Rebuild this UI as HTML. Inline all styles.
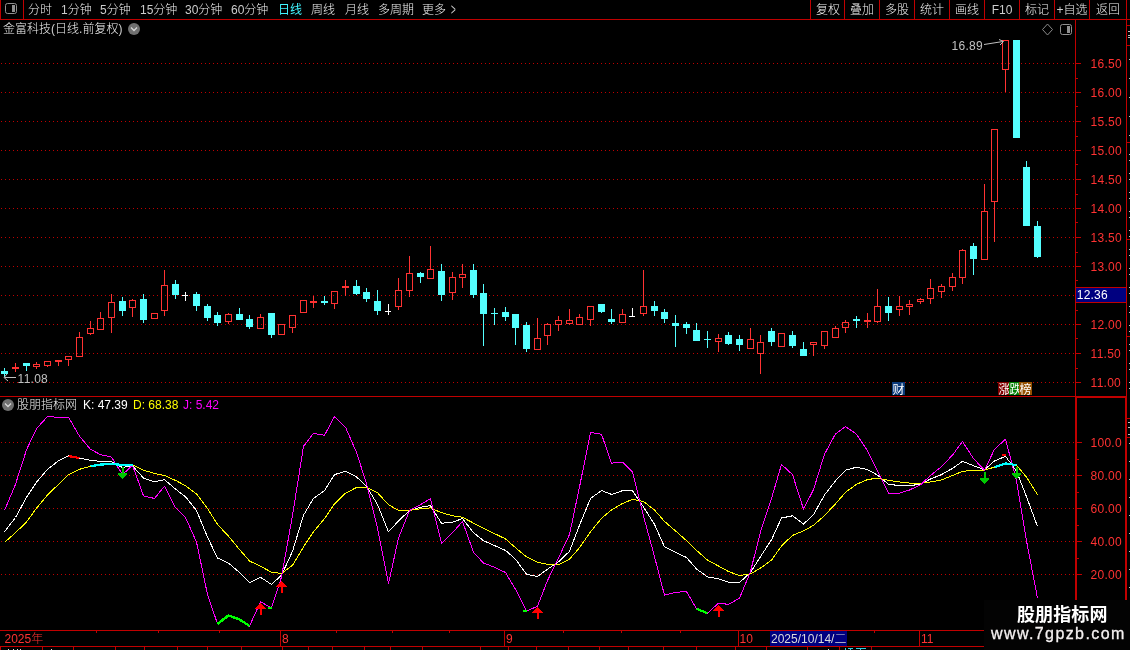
<!DOCTYPE html>
<html lang="zh"><head><meta charset="utf-8"><title>金富科技 日线</title>
<style>
html,body{margin:0;padding:0;background:#000;}
body{width:1130px;height:650px;overflow:hidden;position:relative;font-family:"Liberation Sans","Noto Sans CJK SC",sans-serif;font-size:12px;color:#F0F0F0;font-weight:300;}
.l{color:#CCCCCC;font-weight:400;}
.t{position:absolute;white-space:nowrap;line-height:14px;height:14px;}
.tb{top:3px;}
.bt{position:absolute;top:3px;width:34px;text-align:center;line-height:14px;white-space:nowrap;}
svg{position:absolute;left:0;top:0;}
#root{position:absolute;left:0;top:0;width:1130px;height:650px;overflow:hidden;will-change:transform;}
.ax{font-family:"Liberation Sans",sans-serif;font-size:12px;fill:#FF3232;letter-spacing:0.25px;}
#wm{position:absolute;left:984px;top:600px;width:146px;height:50px;background:#030303;}
#wm .a{position:absolute;left:33px;top:3px;font-size:18px;line-height:24px;font-weight:bold;color:#fff;white-space:nowrap;letter-spacing:0.1px;}
#wm .b{position:absolute;left:7px;top:24px;font-size:16px;line-height:20px;color:#f4f0f0;white-space:nowrap;letter-spacing:1.4px;-webkit-text-stroke:0.3px #f4f0f0;font-family:"Liberation Sans",sans-serif;}
.tag{position:absolute;top:382px;width:13px;height:13px;line-height:16px;font-size:12px;font-weight:400;color:#fff;overflow:hidden;text-align:center;}
</style></head><body><div id="root">

<svg width="1130" height="650" viewBox="0 0 1130 650" shape-rendering="crispEdges">
<line x1="1" y1="63.5" x2="1074" y2="63.5" stroke="#C00000" stroke-width="1" stroke-dasharray="1 3"/>
<line x1="1" y1="92.5" x2="1074" y2="92.5" stroke="#C00000" stroke-width="1" stroke-dasharray="1 3"/>
<line x1="1" y1="121.5" x2="1074" y2="121.5" stroke="#C00000" stroke-width="1" stroke-dasharray="1 3"/>
<line x1="1" y1="150.5" x2="1074" y2="150.5" stroke="#C00000" stroke-width="1" stroke-dasharray="1 3"/>
<line x1="1" y1="179.5" x2="1074" y2="179.5" stroke="#C00000" stroke-width="1" stroke-dasharray="1 3"/>
<line x1="1" y1="208.5" x2="1074" y2="208.5" stroke="#C00000" stroke-width="1" stroke-dasharray="1 3"/>
<line x1="1" y1="237.5" x2="1074" y2="237.5" stroke="#C00000" stroke-width="1" stroke-dasharray="1 3"/>
<line x1="1" y1="266.5" x2="1074" y2="266.5" stroke="#C00000" stroke-width="1" stroke-dasharray="1 3"/>
<line x1="1" y1="295.5" x2="1074" y2="295.5" stroke="#C00000" stroke-width="1" stroke-dasharray="1 3"/>
<line x1="1" y1="324.5" x2="1074" y2="324.5" stroke="#C00000" stroke-width="1" stroke-dasharray="1 3"/>
<line x1="1" y1="353.5" x2="1074" y2="353.5" stroke="#C00000" stroke-width="1" stroke-dasharray="1 3"/>
<line x1="1" y1="382.5" x2="1074" y2="382.5" stroke="#C00000" stroke-width="1" stroke-dasharray="1 3"/>
<line x1="1" y1="442.5" x2="1074" y2="442.5" stroke="#C00000" stroke-width="1" stroke-dasharray="1 3"/>
<line x1="1" y1="475.5" x2="1074" y2="475.5" stroke="#C00000" stroke-width="1" stroke-dasharray="1 3"/>
<line x1="1" y1="508.5" x2="1074" y2="508.5" stroke="#C00000" stroke-width="1" stroke-dasharray="1 3"/>
<line x1="1" y1="541.5" x2="1074" y2="541.5" stroke="#C00000" stroke-width="1" stroke-dasharray="1 3"/>
<line x1="1" y1="574.5" x2="1074" y2="574.5" stroke="#C00000" stroke-width="1" stroke-dasharray="1 3"/>
<rect x="0" y="19" width="1130" height="1" fill="#C00000"/>
<rect x="0" y="0" width="1" height="20" fill="#C00000"/>
<rect x="23" y="0" width="1" height="20" fill="#C00000"/>
<rect x="810" y="0" width="1" height="20" fill="#C00000"/>
<rect x="844" y="0" width="1" height="20" fill="#C00000"/>
<rect x="879" y="0" width="1" height="20" fill="#C00000"/>
<rect x="914" y="0" width="1" height="20" fill="#C00000"/>
<rect x="949" y="0" width="1" height="20" fill="#C00000"/>
<rect x="984" y="0" width="1" height="20" fill="#C00000"/>
<rect x="1019" y="0" width="1" height="20" fill="#C00000"/>
<rect x="1054" y="0" width="1" height="20" fill="#C00000"/>
<rect x="1089" y="0" width="1" height="20" fill="#C00000"/>
<rect x="1126" y="0" width="1" height="600" fill="#C00000"/>
<rect x="1075" y="20" width="1" height="580" fill="#C00000"/>
<rect x="1076" y="396" width="1" height="204" fill="#C00000"/>
<rect x="1125" y="396" width="1" height="204" fill="#C00000"/>
<rect x="1075" y="397" width="52" height="1" fill="#C00000"/>
<rect x="0" y="396" width="1127" height="1" fill="#C00000"/>
<rect x="0" y="630" width="984" height="1" fill="#C00000"/>
<rect x="0" y="646" width="984" height="1" fill="#C00000"/>
<rect x="1076" y="63" width="5" height="1" fill="#C00000"/>
<rect x="1076" y="92" width="5" height="1" fill="#C00000"/>
<rect x="1076" y="121" width="5" height="1" fill="#C00000"/>
<rect x="1076" y="150" width="5" height="1" fill="#C00000"/>
<rect x="1076" y="179" width="5" height="1" fill="#C00000"/>
<rect x="1076" y="208" width="5" height="1" fill="#C00000"/>
<rect x="1076" y="237" width="5" height="1" fill="#C00000"/>
<rect x="1076" y="266" width="5" height="1" fill="#C00000"/>
<rect x="1076" y="295" width="5" height="1" fill="#C00000"/>
<rect x="1076" y="324" width="5" height="1" fill="#C00000"/>
<rect x="1076" y="353" width="5" height="1" fill="#C00000"/>
<rect x="1076" y="382" width="5" height="1" fill="#C00000"/>
<rect x="1076" y="78" width="2" height="1" fill="#C00000"/>
<rect x="1076" y="106" width="2" height="1" fill="#C00000"/>
<rect x="1076" y="136" width="2" height="1" fill="#C00000"/>
<rect x="1076" y="164" width="2" height="1" fill="#C00000"/>
<rect x="1076" y="194" width="2" height="1" fill="#C00000"/>
<rect x="1076" y="222" width="2" height="1" fill="#C00000"/>
<rect x="1076" y="252" width="2" height="1" fill="#C00000"/>
<rect x="1076" y="280" width="2" height="1" fill="#C00000"/>
<rect x="1076" y="310" width="2" height="1" fill="#C00000"/>
<rect x="1076" y="338" width="2" height="1" fill="#C00000"/>
<rect x="1076" y="368" width="2" height="1" fill="#C00000"/>
<rect x="1077" y="442" width="5" height="1" fill="#C00000"/>
<rect x="1077" y="475" width="5" height="1" fill="#C00000"/>
<rect x="1077" y="508" width="5" height="1" fill="#C00000"/>
<rect x="1077" y="541" width="5" height="1" fill="#C00000"/>
<rect x="1077" y="574" width="5" height="1" fill="#C00000"/>
<rect x="1077" y="459" width="2" height="1" fill="#C00000"/>
<rect x="1077" y="492" width="2" height="1" fill="#C00000"/>
<rect x="1077" y="525" width="2" height="1" fill="#C00000"/>
<rect x="1077" y="558" width="2" height="1" fill="#C00000"/>
<rect x="1076" y="288" width="50" height="15" fill="#000080"/>
<rect x="1076" y="287" width="50" height="1" fill="#C00000"/>
<rect x="1076" y="302" width="50" height="1" fill="#C00000"/>
<rect x="1127" y="25" width="3" height="1" fill="#C00000"/>
<rect x="1127" y="45" width="3" height="1" fill="#C00000"/>
<rect x="1127" y="142" width="3" height="1" fill="#C00000"/>
<rect x="1127" y="239" width="3" height="1" fill="#C00000"/>
<rect x="1127" y="336" width="3" height="1" fill="#C00000"/>
<rect x="1127" y="418" width="3" height="1" fill="#C00000"/>
<rect x="1127" y="437" width="3" height="1" fill="#C00000"/>
<rect x="1128" y="31" width="2" height="1" fill="#C0C0C0"/>
<rect x="1128" y="35" width="2" height="1" fill="#C0C0C0"/>
<rect x="1128" y="37" width="2" height="1" fill="#C0C0C0"/>
<rect x="1128" y="422" width="2" height="1" fill="#C0C0C0"/>
<rect x="1128" y="427" width="2" height="1" fill="#C0C0C0"/>
<rect x="1128" y="434" width="2" height="1" fill="#C0C0C0"/>
<rect x="1129" y="59" width="1" height="1" fill="#C0C0C0"/>
<rect x="1129" y="78" width="1" height="1" fill="#C0C0C0"/>
<rect x="1129" y="97" width="1" height="1" fill="#C0C0C0"/>
<rect x="1129" y="116" width="1" height="1" fill="#C0C0C0"/>
<rect x="1129" y="135" width="1" height="1" fill="#C0C0C0"/>
<rect x="1129" y="154" width="1" height="1" fill="#C0C0C0"/>
<rect x="1129" y="173" width="1" height="1" fill="#C0C0C0"/>
<rect x="1129" y="192" width="1" height="1" fill="#C0C0C0"/>
<rect x="1129" y="211" width="1" height="1" fill="#C0C0C0"/>
<rect x="1129" y="230" width="1" height="1" fill="#C0C0C0"/>
<rect x="1129" y="249" width="1" height="1" fill="#C0C0C0"/>
<rect x="1129" y="268" width="1" height="1" fill="#C0C0C0"/>
<rect x="1129" y="287" width="1" height="1" fill="#C0C0C0"/>
<rect x="1129" y="306" width="1" height="1" fill="#C0C0C0"/>
<rect x="1129" y="325" width="1" height="1" fill="#C0C0C0"/>
<rect x="1129" y="344" width="1" height="1" fill="#C0C0C0"/>
<rect x="1129" y="363" width="1" height="1" fill="#C0C0C0"/>
<rect x="1129" y="382" width="1" height="1" fill="#C0C0C0"/>
<rect x="1129" y="160" width="1" height="1" fill="#C0C0C0"/>
<rect x="1129" y="179" width="1" height="1" fill="#C0C0C0"/>
<rect x="1129" y="198" width="1" height="1" fill="#C0C0C0"/>
<rect x="1129" y="217" width="1" height="1" fill="#C0C0C0"/>
<rect x="1129" y="236" width="1" height="1" fill="#C0C0C0"/>
<rect x="1129" y="255" width="1" height="1" fill="#C0C0C0"/>
<rect x="1129" y="274" width="1" height="1" fill="#C0C0C0"/>
<rect x="1129" y="293" width="1" height="1" fill="#C0C0C0"/>
<rect x="1129" y="312" width="1" height="1" fill="#C0C0C0"/>
<rect x="1129" y="331" width="1" height="1" fill="#C0C0C0"/>
<rect x="1129" y="350" width="1" height="1" fill="#C0C0C0"/>
<rect x="1129" y="369" width="1" height="1" fill="#C0C0C0"/>
<rect x="1129" y="388" width="1" height="1" fill="#C0C0C0"/>
<rect x="1129" y="443" width="1" height="1" fill="#C0C0C0"/>
<rect x="1129" y="461" width="1" height="1" fill="#C0C0C0"/>
<rect x="1129" y="479" width="1" height="1" fill="#C0C0C0"/>
<rect x="1129" y="497" width="1" height="1" fill="#C0C0C0"/>
<rect x="1129" y="515" width="1" height="1" fill="#C0C0C0"/>
<rect x="1129" y="533" width="1" height="1" fill="#C0C0C0"/>
<rect x="1129" y="551" width="1" height="1" fill="#C0C0C0"/>
<rect x="1129" y="569" width="1" height="1" fill="#C0C0C0"/>
<rect x="1129" y="587" width="1" height="1" fill="#C0C0C0"/>
<rect x="280" y="630" width="1" height="17" fill="#C00000"/>
<rect x="504" y="630" width="1" height="17" fill="#C00000"/>
<rect x="738" y="630" width="1" height="17" fill="#C00000"/>
<rect x="919" y="630" width="1" height="17" fill="#C00000"/>
<rect x="96" y="631" width="1" height="2" fill="#C00000"/>
<rect x="158" y="631" width="1" height="2" fill="#C00000"/>
<rect x="219" y="631" width="1" height="2" fill="#C00000"/>
<rect x="336" y="631" width="1" height="2" fill="#C00000"/>
<rect x="392" y="631" width="1" height="2" fill="#C00000"/>
<rect x="449" y="631" width="1" height="2" fill="#C00000"/>
<rect x="563" y="631" width="1" height="2" fill="#C00000"/>
<rect x="621" y="631" width="1" height="2" fill="#C00000"/>
<rect x="680" y="631" width="1" height="2" fill="#C00000"/>
<rect x="874" y="631" width="1" height="2" fill="#C00000"/>
<rect x="770" y="631" width="77" height="15" fill="#000080"/>
<rect x="0" y="647" width="1" height="3" fill="#C00000"/>
<rect x="42" y="647" width="1" height="3" fill="#C00000"/>
<rect x="73" y="647" width="1" height="3" fill="#C00000"/>
<rect x="115" y="647" width="1" height="3" fill="#C00000"/>
<rect x="144" y="647" width="1" height="3" fill="#C00000"/>
<rect x="177" y="647" width="1" height="3" fill="#C00000"/>
<rect x="207" y="647" width="1" height="3" fill="#C00000"/>
<rect x="241" y="647" width="1" height="3" fill="#C00000"/>
<rect x="282" y="647" width="1" height="3" fill="#C00000"/>
<rect x="308" y="647" width="1" height="3" fill="#C00000"/>
<rect x="332" y="647" width="1" height="3" fill="#C00000"/>
<rect x="364" y="647" width="1" height="3" fill="#C00000"/>
<rect x="390" y="647" width="1" height="3" fill="#C00000"/>
<rect x="422" y="647" width="1" height="3" fill="#C00000"/>
<rect x="480" y="647" width="1" height="3" fill="#C00000"/>
<rect x="508" y="647" width="1" height="3" fill="#C00000"/>
<rect x="536" y="647" width="1" height="3" fill="#C00000"/>
<rect x="568" y="647" width="1" height="3" fill="#C00000"/>
<rect x="599" y="647" width="1" height="3" fill="#C00000"/>
<rect x="628" y="647" width="1" height="3" fill="#C00000"/>
<rect x="663" y="647" width="1" height="3" fill="#C00000"/>
<rect x="696" y="647" width="1" height="3" fill="#C00000"/>
<rect x="735" y="647" width="1" height="3" fill="#C00000"/>
<rect x="766" y="647" width="1" height="3" fill="#C00000"/>
<rect x="807" y="647" width="1" height="3" fill="#C00000"/>
<rect x="839" y="647" width="1" height="3" fill="#C00000"/>
<rect x="871" y="647" width="1" height="3" fill="#C00000"/>
<rect x="8" y="649" width="1" height="1" fill="#ddd"/>
<rect x="13" y="649" width="1" height="1" fill="#ddd"/>
<rect x="17" y="649" width="1" height="1" fill="#ddd"/>
<rect x="20" y="649" width="1" height="1" fill="#ddd"/>
<rect x="51" y="649" width="1" height="1" fill="#ddd"/>
<rect x="828" y="649" width="1" height="1" fill="#ddd"/>
<rect x="845" y="648" width="1" height="2" fill="#30d0e0"/><rect x="848" y="648" width="5" height="1" fill="#30d0e0"/><rect x="850" y="649" width="1" height="1" fill="#30d0e0"/><rect x="856" y="648" width="10" height="1" fill="#30d0e0"/><rect x="860" y="649" width="1" height="1" fill="#30d0e0"/>
<rect x="4" y="368" width="1" height="9" fill="#54FFFF"/>
<rect x="1" y="371" width="7" height="3" fill="#54FFFF"/>
<rect x="15" y="363" width="1" height="9" fill="#FF3232"/>
<rect x="12" y="367" width="7" height="2" fill="#FF3232"/>
<rect x="26" y="363" width="1" height="8" fill="#54FFFF"/>
<rect x="23" y="363" width="7" height="3" fill="#54FFFF"/>
<rect x="36" y="362" width="1" height="2" fill="#FF3232"/>
<rect x="36" y="367" width="1" height="2" fill="#FF3232"/>
<rect x="33.5" y="364.5" width="6" height="2" fill="none" stroke="#FF3232" stroke-width="1"/>
<rect x="47" y="366" width="1" height="1" fill="#FF3232"/>
<rect x="44.5" y="361.5" width="6" height="4" fill="none" stroke="#FF3232" stroke-width="1"/>
<rect x="58" y="360" width="1" height="6" fill="#FF3232"/>
<rect x="55" y="360" width="7" height="2" fill="#FF3232"/>
<rect x="68" y="360" width="1" height="6" fill="#FF3232"/>
<rect x="65.5" y="356.5" width="6" height="3" fill="none" stroke="#FF3232" stroke-width="1"/>
<rect x="79" y="332" width="1" height="5" fill="#FF3232"/>
<rect x="76.5" y="337.5" width="6" height="19" fill="none" stroke="#FF3232" stroke-width="1"/>
<rect x="90" y="321" width="1" height="7" fill="#FF3232"/>
<rect x="90" y="334" width="1" height="1" fill="#FF3232"/>
<rect x="87.5" y="328.5" width="6" height="5" fill="none" stroke="#FF3232" stroke-width="1"/>
<rect x="100" y="312" width="1" height="6" fill="#FF3232"/>
<rect x="97.5" y="318.5" width="6" height="11" fill="none" stroke="#FF3232" stroke-width="1"/>
<rect x="111" y="294" width="1" height="8" fill="#FF3232"/>
<rect x="111" y="318" width="1" height="15" fill="#FF3232"/>
<rect x="108.5" y="302.5" width="6" height="15" fill="none" stroke="#FF3232" stroke-width="1"/>
<rect x="122" y="297" width="1" height="19" fill="#54FFFF"/>
<rect x="119" y="301" width="7" height="10" fill="#54FFFF"/>
<rect x="132" y="299" width="1" height="1" fill="#FF3232"/>
<rect x="132" y="308" width="1" height="9" fill="#FF3232"/>
<rect x="129.5" y="300.5" width="6" height="7" fill="none" stroke="#FF3232" stroke-width="1"/>
<rect x="143" y="294" width="1" height="29" fill="#54FFFF"/>
<rect x="140" y="299" width="7" height="21" fill="#54FFFF"/>
<rect x="151.5" y="313.5" width="6" height="5" fill="none" stroke="#FF3232" stroke-width="1"/>
<rect x="164" y="270" width="1" height="15" fill="#FF3232"/>
<rect x="164" y="311" width="1" height="5" fill="#FF3232"/>
<rect x="161.5" y="285.5" width="6" height="25" fill="none" stroke="#FF3232" stroke-width="1"/>
<rect x="175" y="280" width="1" height="19" fill="#54FFFF"/>
<rect x="172" y="284" width="7" height="11" fill="#54FFFF"/>
<rect x="185" y="292" width="1" height="9" fill="#fff"/><rect x="182" y="295" width="6" height="1" fill="#fff"/>
<rect x="196" y="292" width="1" height="19" fill="#54FFFF"/>
<rect x="193" y="294" width="7" height="12" fill="#54FFFF"/>
<rect x="207" y="304" width="1" height="17" fill="#54FFFF"/>
<rect x="204" y="306" width="7" height="12" fill="#54FFFF"/>
<rect x="217" y="312" width="1" height="14" fill="#54FFFF"/>
<rect x="214" y="315" width="7" height="8" fill="#54FFFF"/>
<rect x="228" y="313" width="1" height="1" fill="#FF3232"/>
<rect x="228" y="322" width="1" height="2" fill="#FF3232"/>
<rect x="225.5" y="314.5" width="6" height="7" fill="none" stroke="#FF3232" stroke-width="1"/>
<rect x="239" y="308" width="1" height="12" fill="#54FFFF"/>
<rect x="236" y="314" width="7" height="6" fill="#54FFFF"/>
<rect x="249" y="315" width="1" height="14" fill="#54FFFF"/>
<rect x="246" y="319" width="7" height="8" fill="#54FFFF"/>
<rect x="260" y="314" width="1" height="3" fill="#FF3232"/>
<rect x="257.5" y="317.5" width="6" height="11" fill="none" stroke="#FF3232" stroke-width="1"/>
<rect x="271" y="313" width="1" height="25" fill="#54FFFF"/>
<rect x="268" y="313" width="7" height="22" fill="#54FFFF"/>
<rect x="278.5" y="324.5" width="6" height="10" fill="none" stroke="#FF3232" stroke-width="1"/>
<rect x="292" y="328" width="1" height="5" fill="#FF3232"/>
<rect x="289.5" y="315.5" width="6" height="12" fill="none" stroke="#FF3232" stroke-width="1"/>
<rect x="300.5" y="300.5" width="6" height="12" fill="none" stroke="#FF3232" stroke-width="1"/>
<rect x="313" y="296" width="1" height="12" fill="#FF3232"/>
<rect x="310" y="301" width="7" height="2" fill="#FF3232"/>
<rect x="324" y="296" width="1" height="9" fill="#54FFFF"/>
<rect x="321" y="301" width="7" height="2" fill="#54FFFF"/>
<rect x="334" y="304" width="1" height="5" fill="#FF3232"/>
<rect x="331.5" y="291.5" width="6" height="12" fill="none" stroke="#FF3232" stroke-width="1"/>
<rect x="345" y="280" width="1" height="16" fill="#FF3232"/>
<rect x="342" y="286" width="7" height="2" fill="#FF3232"/>
<rect x="356" y="280" width="1" height="15" fill="#54FFFF"/>
<rect x="353" y="286" width="7" height="8" fill="#54FFFF"/>
<rect x="366" y="288" width="1" height="14" fill="#54FFFF"/>
<rect x="363" y="292" width="7" height="7" fill="#54FFFF"/>
<rect x="377" y="290" width="1" height="25" fill="#54FFFF"/>
<rect x="374" y="301" width="7" height="10" fill="#54FFFF"/>
<rect x="388" y="304" width="1" height="11" fill="#fff"/><rect x="385" y="311" width="6" height="1" fill="#fff"/>
<rect x="398" y="278" width="1" height="12" fill="#FF3232"/>
<rect x="398" y="307" width="1" height="3" fill="#FF3232"/>
<rect x="395.5" y="290.5" width="6" height="16" fill="none" stroke="#FF3232" stroke-width="1"/>
<rect x="409" y="256" width="1" height="17" fill="#FF3232"/>
<rect x="409" y="291" width="1" height="6" fill="#FF3232"/>
<rect x="406.5" y="273.5" width="6" height="17" fill="none" stroke="#FF3232" stroke-width="1"/>
<rect x="420" y="272" width="1" height="11" fill="#54FFFF"/>
<rect x="417" y="273" width="7" height="4" fill="#54FFFF"/>
<rect x="430" y="246" width="1" height="23" fill="#FF3232"/>
<rect x="427.5" y="269.5" width="6" height="9" fill="none" stroke="#FF3232" stroke-width="1"/>
<rect x="441" y="264" width="1" height="37" fill="#54FFFF"/>
<rect x="438" y="271" width="7" height="24" fill="#54FFFF"/>
<rect x="452" y="272" width="1" height="5" fill="#FF3232"/>
<rect x="452" y="293" width="1" height="7" fill="#FF3232"/>
<rect x="449.5" y="277.5" width="6" height="15" fill="none" stroke="#FF3232" stroke-width="1"/>
<rect x="462" y="264" width="1" height="10" fill="#FF3232"/>
<rect x="462" y="278" width="1" height="10" fill="#FF3232"/>
<rect x="459.5" y="274.5" width="6" height="3" fill="none" stroke="#FF3232" stroke-width="1"/>
<rect x="473" y="264" width="1" height="34" fill="#54FFFF"/>
<rect x="470" y="270" width="7" height="25" fill="#54FFFF"/>
<rect x="483" y="284" width="1" height="62" fill="#54FFFF"/>
<rect x="480" y="293" width="7" height="21" fill="#54FFFF"/>
<rect x="494" y="308" width="1" height="17" fill="#54FFFF"/>
<rect x="491" y="313" width="7" height="1" fill="#54FFFF"/>
<rect x="505" y="307" width="1" height="14" fill="#54FFFF"/>
<rect x="502" y="312" width="7" height="5" fill="#54FFFF"/>
<rect x="515" y="314" width="1" height="31" fill="#54FFFF"/>
<rect x="512" y="314" width="7" height="14" fill="#54FFFF"/>
<rect x="526" y="322" width="1" height="30" fill="#54FFFF"/>
<rect x="523" y="325" width="7" height="24" fill="#54FFFF"/>
<rect x="537" y="318" width="1" height="20" fill="#FF3232"/>
<rect x="534.5" y="338.5" width="6" height="11" fill="none" stroke="#FF3232" stroke-width="1"/>
<rect x="547" y="323" width="1" height="1" fill="#FF3232"/>
<rect x="547" y="336" width="1" height="9" fill="#FF3232"/>
<rect x="544.5" y="324.5" width="6" height="11" fill="none" stroke="#FF3232" stroke-width="1"/>
<rect x="558" y="316" width="1" height="4" fill="#FF3232"/>
<rect x="558" y="325" width="1" height="6" fill="#FF3232"/>
<rect x="555.5" y="320.5" width="6" height="4" fill="none" stroke="#FF3232" stroke-width="1"/>
<rect x="569" y="309" width="1" height="11" fill="#FF3232"/>
<rect x="569" y="324" width="1" height="1" fill="#FF3232"/>
<rect x="566.5" y="320.5" width="6" height="3" fill="none" stroke="#FF3232" stroke-width="1"/>
<rect x="579" y="314" width="1" height="3" fill="#FF3232"/>
<rect x="576.5" y="317.5" width="6" height="7" fill="none" stroke="#FF3232" stroke-width="1"/>
<rect x="590" y="320" width="1" height="6" fill="#FF3232"/>
<rect x="587.5" y="306.5" width="6" height="13" fill="none" stroke="#FF3232" stroke-width="1"/>
<rect x="601" y="304" width="1" height="9" fill="#54FFFF"/>
<rect x="598" y="304" width="7" height="8" fill="#54FFFF"/>
<rect x="611" y="309" width="1" height="15" fill="#54FFFF"/>
<rect x="608" y="319" width="7" height="3" fill="#54FFFF"/>
<rect x="622" y="309" width="1" height="5" fill="#FF3232"/>
<rect x="619.5" y="314.5" width="6" height="8" fill="none" stroke="#FF3232" stroke-width="1"/>
<rect x="632" y="308" width="1" height="9" fill="#fff"/><rect x="629" y="316" width="6" height="1" fill="#fff"/>
<rect x="643" y="270" width="1" height="36" fill="#FF3232"/>
<rect x="643" y="314" width="1" height="2" fill="#FF3232"/>
<rect x="640.5" y="306.5" width="6" height="7" fill="none" stroke="#FF3232" stroke-width="1"/>
<rect x="654" y="301" width="1" height="15" fill="#54FFFF"/>
<rect x="651" y="306" width="7" height="5" fill="#54FFFF"/>
<rect x="664" y="309" width="1" height="14" fill="#54FFFF"/>
<rect x="661" y="312" width="7" height="7" fill="#54FFFF"/>
<rect x="675" y="315" width="1" height="32" fill="#54FFFF"/>
<rect x="672" y="323" width="7" height="3" fill="#54FFFF"/>
<rect x="686" y="322" width="1" height="12" fill="#54FFFF"/>
<rect x="683" y="324" width="7" height="4" fill="#54FFFF"/>
<rect x="696" y="323" width="1" height="18" fill="#54FFFF"/>
<rect x="693" y="330" width="7" height="11" fill="#54FFFF"/>
<rect x="707" y="331" width="1" height="17" fill="#54FFFF"/>
<rect x="704" y="339" width="7" height="1" fill="#54FFFF"/>
<rect x="718" y="334" width="1" height="4" fill="#FF3232"/>
<rect x="718" y="342" width="1" height="10" fill="#FF3232"/>
<rect x="715.5" y="338.5" width="6" height="3" fill="none" stroke="#FF3232" stroke-width="1"/>
<rect x="728" y="332" width="1" height="13" fill="#54FFFF"/>
<rect x="725" y="335" width="7" height="9" fill="#54FFFF"/>
<rect x="739" y="335" width="1" height="16" fill="#54FFFF"/>
<rect x="736" y="339" width="7" height="6" fill="#54FFFF"/>
<rect x="750" y="328" width="1" height="11" fill="#FF3232"/>
<rect x="747.5" y="339.5" width="6" height="9" fill="none" stroke="#FF3232" stroke-width="1"/>
<rect x="760" y="335" width="1" height="7" fill="#FF3232"/>
<rect x="760" y="354" width="1" height="20" fill="#FF3232"/>
<rect x="757.5" y="342.5" width="6" height="11" fill="none" stroke="#FF3232" stroke-width="1"/>
<rect x="771" y="328" width="1" height="18" fill="#54FFFF"/>
<rect x="768" y="331" width="7" height="11" fill="#54FFFF"/>
<rect x="778.5" y="333.5" width="6" height="13" fill="none" stroke="#FF3232" stroke-width="1"/>
<rect x="792" y="331" width="1" height="17" fill="#54FFFF"/>
<rect x="789" y="335" width="7" height="11" fill="#54FFFF"/>
<rect x="803" y="342" width="1" height="14" fill="#54FFFF"/>
<rect x="800" y="349" width="7" height="7" fill="#54FFFF"/>
<rect x="813" y="345" width="1" height="11" fill="#FF3232"/>
<rect x="810.5" y="342.5" width="6" height="2" fill="none" stroke="#FF3232" stroke-width="1"/>
<rect x="824" y="346" width="1" height="3" fill="#FF3232"/>
<rect x="821.5" y="331.5" width="6" height="14" fill="none" stroke="#FF3232" stroke-width="1"/>
<rect x="835" y="326" width="1" height="2" fill="#FF3232"/>
<rect x="832.5" y="328.5" width="6" height="9" fill="none" stroke="#FF3232" stroke-width="1"/>
<rect x="845" y="320" width="1" height="2" fill="#FF3232"/>
<rect x="845" y="328" width="1" height="5" fill="#FF3232"/>
<rect x="842.5" y="322.5" width="6" height="5" fill="none" stroke="#FF3232" stroke-width="1"/>
<rect x="856" y="316" width="1" height="12" fill="#54FFFF"/>
<rect x="853" y="319" width="7" height="2" fill="#54FFFF"/>
<rect x="867" y="313" width="1" height="15" fill="#FF3232"/>
<rect x="864" y="320" width="7" height="2" fill="#FF3232"/>
<rect x="877" y="289" width="1" height="17" fill="#FF3232"/>
<rect x="877" y="322" width="1" height="1" fill="#FF3232"/>
<rect x="874.5" y="306.5" width="6" height="15" fill="none" stroke="#FF3232" stroke-width="1"/>
<rect x="888" y="297" width="1" height="24" fill="#54FFFF"/>
<rect x="885" y="306" width="7" height="7" fill="#54FFFF"/>
<rect x="899" y="296" width="1" height="10" fill="#FF3232"/>
<rect x="899" y="310" width="1" height="6" fill="#FF3232"/>
<rect x="896.5" y="306.5" width="6" height="3" fill="none" stroke="#FF3232" stroke-width="1"/>
<rect x="909" y="300" width="1" height="4" fill="#FF3232"/>
<rect x="909" y="307" width="1" height="8" fill="#FF3232"/>
<rect x="906.5" y="304.5" width="6" height="2" fill="none" stroke="#FF3232" stroke-width="1"/>
<rect x="920" y="298" width="1" height="1" fill="#FF3232"/>
<rect x="920" y="302" width="1" height="2" fill="#FF3232"/>
<rect x="917.5" y="299.5" width="6" height="2" fill="none" stroke="#FF3232" stroke-width="1"/>
<rect x="930" y="279" width="1" height="9" fill="#FF3232"/>
<rect x="930" y="299" width="1" height="5" fill="#FF3232"/>
<rect x="927.5" y="288.5" width="6" height="10" fill="none" stroke="#FF3232" stroke-width="1"/>
<rect x="941" y="284" width="1" height="2" fill="#FF3232"/>
<rect x="941" y="292" width="1" height="6" fill="#FF3232"/>
<rect x="938.5" y="286.5" width="6" height="5" fill="none" stroke="#FF3232" stroke-width="1"/>
<rect x="952" y="273" width="1" height="4" fill="#FF3232"/>
<rect x="952" y="287" width="1" height="4" fill="#FF3232"/>
<rect x="949.5" y="277.5" width="6" height="9" fill="none" stroke="#FF3232" stroke-width="1"/>
<rect x="962" y="249" width="1" height="1" fill="#FF3232"/>
<rect x="962" y="278" width="1" height="6" fill="#FF3232"/>
<rect x="959.5" y="250.5" width="6" height="27" fill="none" stroke="#FF3232" stroke-width="1"/>
<rect x="973" y="243" width="1" height="32" fill="#54FFFF"/>
<rect x="970" y="246" width="7" height="13" fill="#54FFFF"/>
<rect x="984" y="184" width="1" height="27" fill="#FF3232"/>
<rect x="981.5" y="211.5" width="6" height="48" fill="none" stroke="#FF3232" stroke-width="1"/>
<rect x="994" y="202" width="1" height="40" fill="#FF3232"/>
<rect x="991.5" y="129.5" width="6" height="72" fill="none" stroke="#FF3232" stroke-width="1"/>
<rect x="1005" y="70" width="1" height="22" fill="#FF3232"/>
<rect x="1002.5" y="40.5" width="6" height="29" fill="none" stroke="#FF3232" stroke-width="1"/>
<rect x="1016" y="40" width="1" height="98" fill="#54FFFF"/>
<rect x="1013" y="40" width="7" height="98" fill="#54FFFF"/>
<rect x="1026" y="161" width="1" height="65" fill="#54FFFF"/>
<rect x="1023" y="167" width="7" height="59" fill="#54FFFF"/>
<rect x="1037" y="221" width="1" height="37" fill="#54FFFF"/>
<rect x="1034" y="226" width="7" height="31" fill="#54FFFF"/>
<polyline points="4.5,531.8 15.5,517.5 26.5,497.3 36.5,482.2 47.5,469.3 58.5,460.8 68.5,456.0 79.5,458.1 90.5,460.4 100.5,461.3 111.5,461.9 122.5,467.5 132.5,465.8 143.5,478.1 154.5,481.7 164.5,479.6 175.5,489.1 185.5,496.7 196.5,510.5 207.5,537.1 217.5,558.0 228.5,563.1 239.5,572.5 249.5,582.6 260.5,577.3 271.5,584.4 281.5,575.2 292.5,551.3 303.5,515.2 313.5,498.5 324.5,490.5 334.5,474.6 345.5,471.4 356.5,476.9 366.5,486.1 377.5,504.5 388.5,531.8 398.5,521.0 409.5,510.5 420.5,507.3 430.5,505.6 441.5,523.3 452.5,522.2 462.5,518.6 473.5,532.7 483.5,540.7 494.5,545.6 505.5,550.4 515.5,559.2 526.5,574.3 537.5,576.4 547.5,569.2 558.5,561.9 569.5,551.3 579.5,525.3 590.5,498.5 601.5,490.5 611.5,494.4 622.5,490.7 632.5,490.7 643.5,507.0 654.5,524.4 664.5,546.9 675.5,552.2 686.5,557.5 696.5,569.0 707.5,576.9 718.5,578.7 728.5,582.3 739.5,582.5 750.5,572.5 760.5,556.6 771.5,539.8 781.5,518.0 792.5,515.8 803.5,524.0 813.5,514.7 824.5,495.0 835.5,480.8 845.5,470.2 856.5,467.2 867.5,469.6 877.5,475.1 888.5,484.3 899.5,485.6 909.5,485.6 920.5,484.3 930.5,479.0 941.5,474.6 952.5,468.4 962.5,461.3 973.5,465.7 984.5,469.8 994.5,460.9 1005.5,456.3 1016.5,471.0 1026.5,496.7 1037.5,526.5" fill="none" stroke="#FFFFFF" stroke-width="1" stroke-linejoin="round"/>
<polyline points="4.5,542.4 15.5,532.7 26.5,522.0 36.5,508.2 47.5,495.0 58.5,484.3 68.5,474.6 79.5,469.3 90.5,466.3 100.5,464.6 111.5,464.0 122.5,464.9 132.5,464.9 143.5,470.2 154.5,473.4 164.5,475.5 175.5,480.4 185.5,485.7 196.5,494.0 207.5,508.5 217.5,524.4 228.5,536.2 239.5,549.5 249.5,561.0 260.5,566.3 271.5,572.2 281.5,573.4 292.5,565.4 303.5,546.9 313.5,531.8 324.5,518.6 334.5,503.8 345.5,493.2 356.5,487.5 366.5,487.5 377.5,492.7 388.5,504.7 398.5,510.4 409.5,510.4 420.5,508.8 430.5,507.9 441.5,512.7 452.5,515.7 462.5,517.3 473.5,523.1 483.5,528.3 494.5,533.6 505.5,538.9 515.5,547.7 526.5,556.9 537.5,562.4 547.5,564.4 558.5,564.6 569.5,559.2 579.5,547.7 590.5,531.8 601.5,518.3 611.5,510.0 622.5,503.5 632.5,499.4 643.5,501.5 654.5,510.0 664.5,521.4 675.5,530.9 686.5,540.7 696.5,550.4 707.5,560.1 718.5,566.0 728.5,571.6 739.5,575.5 750.5,573.9 760.5,568.1 771.5,560.1 781.5,546.0 792.5,535.4 803.5,530.9 813.5,525.3 824.5,515.6 835.5,503.8 845.5,492.3 856.5,484.3 867.5,479.6 877.5,478.1 888.5,480.3 899.5,482.0 909.5,483.1 920.5,483.4 930.5,482.0 941.5,479.9 952.5,475.5 962.5,471.4 973.5,470.1 984.5,470.1 994.5,467.1 1005.5,463.4 1016.5,465.2 1026.5,477.2 1037.5,494.6" fill="none" stroke="#FFFF00" stroke-width="1" stroke-linejoin="round"/>
<polyline points="4.5,510.5 15.5,484.3 26.5,449.8 36.5,428.6 47.5,416.5 58.5,417.3 68.5,417.3 79.5,436.2 90.5,449.3 100.5,454.6 111.5,457.1 122.5,474.6 132.5,465.2 143.5,495.8 154.5,498.5 164.5,486.1 175.5,507.7 185.5,517.5 196.5,542.0 207.5,594.6 217.5,623.8 228.5,615.5 239.5,619.4 249.5,626.0 260.5,601.7 271.5,607.9 281.5,577.0 292.5,515.5 303.5,446.3 313.5,433.4 324.5,435.3 334.5,416.5 345.5,427.2 356.5,452.5 366.5,483.5 377.5,528.0 388.5,583.7 398.5,538.0 409.5,510.5 420.5,504.7 430.5,498.5 441.5,543.3 452.5,532.7 462.5,521.5 473.5,552.2 483.5,563.1 494.5,567.2 505.5,572.5 515.5,589.3 526.5,611.1 537.5,606.2 547.5,580.5 558.5,558.0 569.5,534.5 579.5,487.0 590.5,432.5 601.5,434.2 611.5,463.1 622.5,462.2 632.5,472.0 643.5,516.0 654.5,556.6 664.5,595.2 675.5,592.3 686.5,591.5 696.5,608.8 707.5,613.2 718.5,603.1 728.5,604.4 739.5,598.2 750.5,571.6 760.5,531.8 771.5,498.5 781.5,464.5 792.5,474.6 803.5,509.1 813.5,489.6 824.5,454.2 835.5,433.9 845.5,426.5 856.5,434.2 867.5,450.7 877.5,471.1 888.5,493.2 899.5,493.2 909.5,490.0 920.5,484.8 930.5,475.5 941.5,466.6 952.5,455.1 962.5,441.5 973.5,458.6 984.5,470.1 994.5,449.3 1005.5,439.2 1016.5,480.8 1026.5,540.8 1037.5,598.2" fill="none" stroke="#FF00FF" stroke-width="1" stroke-linejoin="round"/>
<polyline points="68.5,456.0 79.5,458.1" fill="none" stroke="#FF0000" stroke-width="2.2" stroke-linejoin="round"/>
<rect x="1002" y="454" width="4" height="2" fill="#FF0000"/>
<polyline points="90.5,466.3 100.5,464.6 111.5,464.0 122.5,464.9 132.5,464.9" fill="none" stroke="#00FFFF" stroke-width="2.2" stroke-linejoin="round"/>
<polyline points="994.5,467.1 1005.5,463.4 1016.5,465.2" fill="none" stroke="#00FFFF" stroke-width="2.2" stroke-linejoin="round"/>
<polyline points="217.5,623.8 228.5,615.5 239.5,619.4 249.5,626.0" fill="none" stroke="#00FF00" stroke-width="2.4" stroke-linejoin="round"/>
<polyline points="696.5,608.8 707.5,613.2" fill="none" stroke="#00FF00" stroke-width="2.4" stroke-linejoin="round"/>
<rect x="268" y="607" width="4" height="2" fill="#00FF00"/>
<rect x="523" y="610" width="4" height="2" fill="#00FF00"/>
<rect x="121.5" y="467" width="2" height="7" fill="#00C800"/><polygon points="117.2,473 127.8,473 122.5,479.5" fill="#00C800"/>
<rect x="983.5" y="472" width="2" height="7" fill="#00C800"/><polygon points="979.2,478 989.8,478 984.5,484.5" fill="#00C800"/>
<rect x="1015.5" y="467" width="2" height="7" fill="#00C800"/><polygon points="1011.2,473 1021.8,473 1016.5,479.5" fill="#00C800"/>
<polygon points="260.5,602.5 266.1,609 254.9,609" fill="#FF0000"/><rect x="259.5" y="609" width="2" height="6" fill="#FF0000"/>
<polygon points="281.5,580.5 287.1,587 275.9,587" fill="#FF0000"/><rect x="280.5" y="587" width="2" height="6" fill="#FF0000"/>
<polygon points="537.5,606.5 543.1,613 531.9,613" fill="#FF0000"/><rect x="536.5" y="613" width="2" height="6" fill="#FF0000"/>
<polygon points="718.5,604.5 724.1,611 712.9,611" fill="#FF0000"/><rect x="717.5" y="611" width="2" height="6" fill="#FF0000"/>
</svg>
<svg width="1130" height="650" viewBox="0 0 1130 650">
<rect x="5.5" y="3.5" width="11" height="10" rx="2" fill="none" stroke="#909090"/><rect x="12" y="5" width="3" height="7" fill="#909090"/>
<rect x="1060.5" y="24.5" width="11" height="10" rx="2" fill="none" stroke="#909090"/><rect x="1067" y="26" width="3" height="7" fill="#909090"/>
<polygon points="1047.5,24 1052.5,29.5 1047.5,35 1042.5,29.5" fill="none" stroke="#8a8a8a" stroke-width="1"/>
<circle cx="134" cy="29" r="6" fill="#707070"/><polyline points="131,27.5 134,30.5 137,27.5" fill="none" stroke="#d8d8d8" stroke-width="1.3"/>
<circle cx="8" cy="405" r="6" fill="#707070"/><polyline points="5,403.5 8,406.5 11,403.5" fill="none" stroke="#d8d8d8" stroke-width="1.3"/>
<text class="ax" x="1090.6" y="68">16.50</text>
<text class="ax" x="1090.6" y="97">16.00</text>
<text class="ax" x="1090.6" y="126">15.50</text>
<text class="ax" x="1090.6" y="155">15.00</text>
<text class="ax" x="1090.6" y="184">14.50</text>
<text class="ax" x="1090.6" y="213">14.00</text>
<text class="ax" x="1090.6" y="242">13.50</text>
<text class="ax" x="1090.6" y="271">13.00</text>
<text class="ax" x="1090.6" y="329">12.00</text>
<text class="ax" x="1090.6" y="358">11.50</text>
<text class="ax" x="1090.6" y="387">11.00</text>
<text x="1076.8" y="299" font-size="12" letter-spacing="0.2" fill="#fff" font-family="Liberation Sans,sans-serif">12.36</text>
<text class="ax" x="1090.6" y="447">100.0</text>
<text class="ax" x="1090.6" y="480">80.00</text>
<text class="ax" x="1090.6" y="513">60.00</text>
<text class="ax" x="1090.6" y="546">40.00</text>
<text class="ax" x="1090.6" y="579">20.00</text>
<text x="951.6" y="50" font-size="12" letter-spacing="0.25" fill="#C0C0C0" font-family="Liberation Sans,sans-serif">16.89</text>
<polyline points="984,44.5 1003,41.5" fill="none" stroke="#C0C0C0"/><polyline points="999,39.5 1003.5,41.5 1000,45" fill="none" stroke="#C0C0C0"/>
<text x="17.6" y="383" font-size="12" letter-spacing="0.25" fill="#C0C0C0" font-family="Liberation Sans,sans-serif">11.08</text>
<polyline points="16,377.5 4.5,377.5" fill="none" stroke="#C0C0C0"/><polyline points="7,374 4,377.5 8,381" fill="none" stroke="#C0C0C0"/>
</svg>
<div class="t tb" style="left:28px;color:#F0F0F0">分时</div>
<div class="t tb" style="left:61px;color:#F0F0F0"><span class="l">1</span>分钟</div>
<div class="t tb" style="left:100px;color:#F0F0F0"><span class="l">5</span>分钟</div>
<div class="t tb" style="left:140px;color:#F0F0F0"><span class="l">15</span>分钟</div>
<div class="t tb" style="left:185px;color:#F0F0F0"><span class="l">30</span>分钟</div>
<div class="t tb" style="left:231px;color:#F0F0F0"><span class="l">60</span>分钟</div>
<div class="t tb" style="left:278px;color:#40F4FF;font-weight:400">日线</div>
<div class="t tb" style="left:311px;color:#F0F0F0">周线</div>
<div class="t tb" style="left:345px;color:#F0F0F0">月线</div>
<div class="t tb" style="left:378px;color:#F0F0F0">多周期</div>
<div class="t tb" style="left:422px;color:#F0F0F0">更多</div>
<div class="bt" style="left:810px;width:36px">复权</div>
<div class="bt" style="left:844px;width:36px">叠加</div>
<div class="bt" style="left:879px;width:36px">多股</div>
<div class="bt" style="left:914px;width:36px">统计</div>
<div class="bt" style="left:949px;width:36px">画线</div>
<div class="bt" style="left:984px;width:36px"><span class="l">F10</span></div>
<div class="bt" style="left:1019px;width:36px">标记</div>
<div class="bt" style="left:1054px;width:36px"><span class="l">+</span>自选</div>
<div class="bt" style="left:1089px;width:38px">返回</div>
<div class="t tb" style="left:450.5px;font-size:13px;transform:scale(0.62,1.2);transform-origin:0 55%"><span class="l">&gt;</span></div>
<div class="t" style="left:3px;top:22px">金富科技<span class="l">(</span>日线<span class="l">.</span>前复权<span class="l">)</span></div>
<div class="t" style="left:17px;top:398px">股朋指标网</div>
<div class="t" style="left:83px;top:398px;color:#fff">K: 47.39</div>
<div class="t" style="left:133px;top:398px;color:#FFFF00">D: 68.38</div>
<div class="t" style="left:183px;top:398px;color:#FF00FF">J: 5.42</div>
<div class="t" style="left:4.5px;top:632px;color:#FF3232">2025年</div>
<div class="t" style="left:282px;top:632px;color:#FF3232">8</div>
<div class="t" style="left:506px;top:632px;color:#FF3232">9</div>
<div class="t" style="left:739.5px;top:632px;color:#FF3232">10</div>
<div class="t" style="left:921px;top:632px;color:#FF3232">11</div>
<div class="t" style="left:771px;top:632px;color:#DADADA">2025/10/14/二</div>
<div class="tag" style="left:892px;width:13px;background:#0B3A7A">财</div>
<div class="tag" style="left:998px;background:#800000">涨</div>
<div class="tag" style="left:1009px;background:#008000">跌</div>
<div class="tag" style="left:1019px;background:#945000">榜</div>
<div id="wm"><div class="a">股朋指标网</div><div class="b">www.7gpzb.com</div></div>
</div></body></html>
